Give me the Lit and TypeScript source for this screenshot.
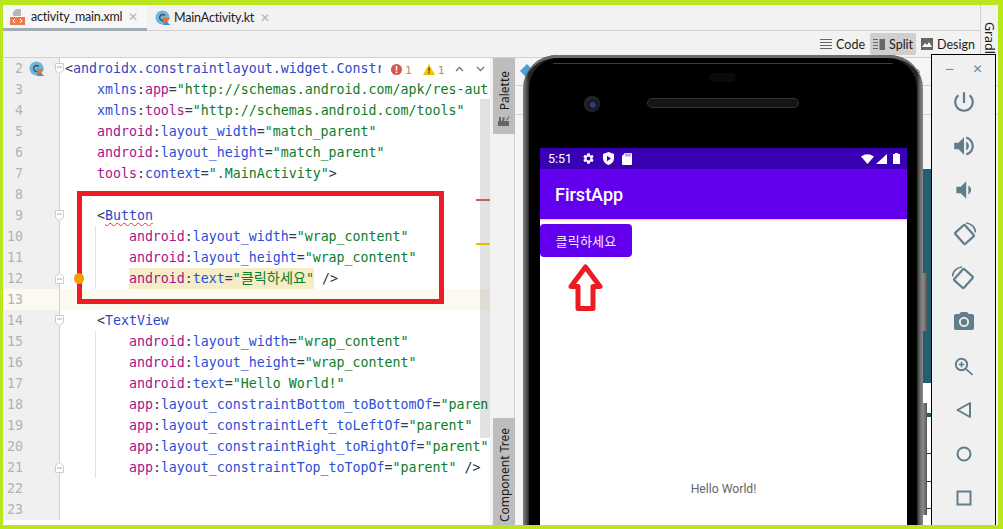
import { LitElement, html, css, svg } from "lit";
import { customElement } from "lit/decorators.js";

const tag = (s: string) => html`<span class="punc">&lt;</span><span class="tag">${s}</span>`;
const ns = (n: string, a: string, v: string, end = "", nsClass = "purple", attrClass = "blue") =>
  html`<span class=${nsClass}>${n}</span>:<span class=${attrClass}>${a}</span>=<span class="val">"${v}"</span>${end ? html` <span class="punc">${end}</span>` : ""}`;

const kotlinIcon = svg`<circle cx="7.5" cy="7.5" r="7" fill="#6fb6d9"/><path d="M10 5.6A3 3 0 1 0 10 9.4" fill="none" stroke="#3d5560" stroke-width="1.4"/><path d="M8 8h7l-3.5 3.5L15 15H8z" fill="#f26b2a"/><path d="M8 15l3.5-3.5L15 15z" fill="#3f8fe0"/>`;

interface Line { n: number; icon?: boolean; fold?: "open" | "close"; bulb?: boolean; cur?: boolean; guide?: boolean; body?: unknown }

const lines: Line[] = [
  { n: 2, icon: true, fold: "open", body: html`<span class="punc">&lt;</span><span class="tag">androidx.constraintlayout.widget.ConstraintLayout</span>` },
  { n: 3, body: html`    ${ns("xmlns", "app", "http://schemas.android.com/apk/res-auto", "", "blue", "purple")}` },
  { n: 4, body: html`    ${ns("xmlns", "tools", "http://schemas.android.com/tools", "", "blue", "purple")}` },
  { n: 5, body: html`    ${ns("android", "layout_width", "match_parent")}` },
  { n: 6, body: html`    ${ns("android", "layout_height", "match_parent")}` },
  { n: 7, body: html`    ${ns("tools", "context", ".MainActivity")}<span class="punc">&gt;</span>` },
  { n: 8, body: "" },
  { n: 9, fold: "open", body: html`    <span class="punc">&lt;</span><span class="tag squig">Button</span>` },
  { n: 10, guide: true, body: html`        ${ns("android", "layout_width", "wrap_content")}` },
  { n: 11, guide: true, body: html`        ${ns("android", "layout_height", "wrap_content")}` },
  { n: 12, guide: true, fold: "close", bulb: true, body: html`        <span class="hl"><span class="purple">android</span>:<span class="blue">text</span>=<span class="val">"<span class="ko">클릭하세요</span>"</span></span> <span class="punc">/&gt;</span>` },
  { n: 13, cur: true, body: "" },
  { n: 14, fold: "open", body: html`    ${tag("TextView")}` },
  { n: 15, guide: true, body: html`        ${ns("android", "layout_width", "wrap_content")}` },
  { n: 16, guide: true, body: html`        ${ns("android", "layout_height", "wrap_content")}` },
  { n: 17, guide: true, body: html`        ${ns("android", "text", "Hello World!")}` },
  { n: 18, guide: true, body: html`        ${ns("app", "layout_constraintBottom_toBottomOf", "parent")}` },
  { n: 19, guide: true, body: html`        ${ns("app", "layout_constraintLeft_toLeftOf", "parent")}` },
  { n: 20, guide: true, body: html`        ${ns("app", "layout_constraintRight_toRightOf", "parent")}` },
  { n: 21, guide: true, fold: "close", body: html`        ${ns("app", "layout_constraintTop_toTopOf", "parent", "/>")}` },
  { n: 22, body: "" },
  { n: 23, body: "" },
];

@customElement("app-root")
export class AppRoot extends LitElement {
  static styles = css`
    :host { display: block; width: 1003px; height: 529px; position: relative; overflow: hidden; font-family: Lato, "Noto Sans", sans-serif; color: #1c1c1c; }
    * { box-sizing: border-box; }
    .frame { width: 1003px; height: 529px; background: #f2f2f2; border: solid #b9e61c; border-width: 5px 5px 4px 3px; display: flex; flex-direction: column; }
    .top { display: flex; height: 53px; flex: none; }
    .topmain { flex: 1; display: flex; flex-direction: column; min-width: 0; }
    .tabs { height: 26px; display: flex; border-bottom: 1px solid #d1d1d1; flex: none; }
    .tab { display: flex; align-items: center; font-size: 12.5px; letter-spacing: -.2px; height: 25px; position: relative; }
    .tab.a { width: 144px; padding-left: 7px; border-bottom: 3px solid #a3adb5; margin-bottom: -1px; height: 26px; background: #f7f7f7; }
    .tab.b { padding-left: 8px; width: 140px; }
    .tab svg { flex: none; margin-right: 4px; }
    .tab.a svg { margin-right: 6px; }
    .x { color: #b4b4b4; font-size: 12px; margin-left: 6px; }
    .toolbar { flex: 1; display: flex; justify-content: flex-end; align-items: center; gap: 2px; border-bottom: 1px solid #d1d1d1; padding-right: 2px; }
    .mode { display: flex; align-items: center; gap: 4px; font-size: 12.5px; height: 22px; padding: 0 3px; border-radius: 2px; }
    .mode.on { background: #cfcfcf; }
    .strip { width: 18px; border-left: 1px solid #d1d1d1; display: flex; flex-direction: column; align-items: center; padding-top: 10px; gap: 7px; font-family: "Noto Sans", sans-serif; font-size: 12.5px; overflow: hidden; }
    .vert { writing-mode: vertical-rl; white-space: nowrap; }
    .main { flex: 1; display: flex; min-height: 0; }
    .editor { width: 487px; flex: none; background: #fff; position: relative; overflow: hidden; }
    .line { display: flex; height: 21px; position: relative; }
    .line.cur { background: #fcf9ee; }
    .gut { width: 57px; flex: none; background: #f0f0f0; border-right: 1px solid #d0d0d0; position: relative; font: 13.3px/21px "DejaVu Sans Mono", monospace; color: #b3b3b3; }
    .line.cur .gut { background: #fcf9ee; }
    .num { position: absolute; right: 36px; top: 0; }
    .gicon { position: absolute; left: 26px; top: 3px; }
    .fold { position: absolute; left: 52px; top: 5px; z-index: 1; }
    .bulb { position: absolute; left: 71px; top: 5px; width: 10px; height: 11px; border-radius: 50%; background: #f2a000; z-index: 1; }
    .code { flex: 1; min-width: 0; margin-right: 1px; position: relative; padding-left: 5px; font: 13.28px/21px "DejaVu Sans Mono", monospace; white-space: pre; overflow: hidden; color: #2f3e4d; }
    .guide { position: absolute; left: 35px; top: 0; bottom: 0; width: 1px; background: #e2e2e2; }
    .tag { color: #2f46c4; }
    .punc { color: #26343f; }
    .blue { color: #2a4fd6; }
    .purple { color: #a3148c; }
    .val { color: #0a7d28; }
    .ko { font-family: "Noto Sans CJK KR", sans-serif; font-size: 14.2px; line-height: 1; }
    .hl { background: #f6edc7; display: inline-block; height: 21px; }
    .squig { text-decoration: underline wavy #e03030 1px; text-underline-offset: 2px; }
    .insp { position: absolute; left: 378px; top: 0; width: 109px; height: 22px; background: #fff; display: flex; align-items: center; font-size: 11px; color: #999; padding-left: 10px; }
    .insp span { margin: 2px 11px 0 3px; color: #a98f70; font-family: "DejaVu Sans Mono", monospace; font-size: 11px; }
    .insp svg { flex: none; }
    .scroll { position: absolute; right: 0; top: 41px; width: 10px; height: 339px; background: rgba(0,0,0,.115); }
    .mark { position: absolute; right: 0; width: 14px; height: 2px; }
    .mark.r { top: 141px; background: #c06060; }
    .mark.y { top: 185px; background: #e0c000; }
    .side { width: 25px; flex: none; background: #f2f2f2; border-right: 1px solid #d0d0d0; display: flex; flex-direction: column; justify-content: space-between; padding-left: 3px; }
    .vtab { background: #bdbdbd; width: 22px; display: flex; flex-direction: column; align-items: center; font-family: "Noto Sans", sans-serif; font-size: 12px; overflow: hidden; }
    .vtab .vert { transform: rotate(180deg); }
    .vtab.p { height: 76px; padding-top: 13px; gap: 5px; }
    .vtab.c { height: 107px; padding-top: 10px; gap: 4px; }
    .design { flex: 1; background: #f5f5f5; display: flex; flex-direction: column; }
    .row1 { height: 28px; border-bottom: 1px solid #d1d1d1; flex: none; }
    .row2 { height: 29px; border-bottom: 1px solid #d1d1d1; flex: none; }
    .phone { position: absolute; left: 523px; top: 55px; width: 400px; height: 470px; border-radius: 34px 34px 0 0; background: linear-gradient(90deg, #7f7f7f, #5a5a5a 3px, #262626 6px, #262626 394px, #6a6a6a 397px, #8a8a8a); padding: 3px 6px 0; }
    .phone::before { content: ""; position: absolute; inset: 0; border-radius: 34px 34px 0 0; border-top: 3px solid #6c6c6c; pointer-events: none; }
    .pin { height: 100%; background: #000; border-radius: 30px 30px 0 0; padding: 90px 10px 0 11px; position: relative; }
    .pin::before { content: ""; position: absolute; left: 24px; right: 24px; top: 5px; height: 1px; background: #3c3c3c; }
    .cam { position: absolute; left: 55px; top: 38px; width: 16px; height: 16px; border-radius: 50%; background: radial-gradient(circle at 55% 55%, #2e3e86 0 2px, #12151f 4px, #262626 7px); }
    .spk { position: absolute; left: 118px; top: 40px; width: 152px; height: 10px; border-radius: 5px; background: #151515; border: 1px solid #333; }
    .sensor { position: absolute; left: 180px; top: 15px; width: 27px; height: 9px; border-radius: 5px; background: #090a0d; }
    .screen { background: #fff; height: 100%; display: flex; flex-direction: column; font-family: Roboto, sans-serif; }
    .status { height: 21px; background: #3a00b3; color: #fff; font-size: 12.5px; display: flex; align-items: center; padding: 0 7px 0 8px; flex: none; gap: 8px; }
    .status .t { margin-right: 2px; }
    .status .sp { flex: 1; }
    .sig { margin-left: -6px; }
    .bat { margin-left: -2px; }
    .appbar { height: 50px; background: #6200ee; color: #fff; font-size: 18px; font-weight: 500; display: flex; align-items: center; padding-left: 15px; flex: none; box-shadow: 0 1px 2px rgba(0,0,0,.25); }
    .btn { margin-top: 5px; width: 92px; height: 33px; background: #6200ee; color: #f4ecff; border-radius: 4px; font: 13px "Noto Sans CJK KR", sans-serif; letter-spacing: .2px; display: flex; align-items: center; justify-content: center; flex: none; }
    .hello { margin-top: 223px; text-align: center; font-size: 12.2px; color: #666; line-height: 18px; }
    .btnside { position: absolute; width: 4px; background: linear-gradient(90deg, #8c8c8c, #555); left: 400px; }
    .btnside.v { top: 218px; height: 58px; }
    .btnside.w { top: 348px; height: 112px; }
    .teal { position: absolute; left: 923px; top: 169px; width: 8px; height: 214px; background: #245e70; }
    .white { position: absolute; left: 923px; top: 383px; width: 8px; height: 142px; background: #fff; }
    .white i { position: absolute; left: 0; width: 100%; background: #245e70; height: 4px; top: 30px; }
    .white b { position: absolute; right: 0; width: 4px; background: #333; height: 1px; }
    .emu { position: absolute; left: 931px; top: 54px; width: 65px; height: 471px; background: #f0f0f0; border: solid #000; border-width: 1px 1px 0; display: flex; flex-direction: column; align-items: center; }
    .wbar { display: flex; justify-content: space-between; align-items: center; width: 38px; height: 28px; flex: none; }
    .wbar span { font-size: 12px; color: #6d8896; line-height: 1; font-family: "DejaVu Sans", sans-serif; }
    .eicons { display: flex; flex-direction: column; align-items: center; gap: 20px; margin-top: 7px; }
    .eicons svg { flex: none; display: block; }
    .flip { transform: scaleX(-1); }
    .redbox { position: absolute; left: 77px; top: 191px; width: 367px; height: 113px; border: 5px solid #ed1c24; }
    .arrow { position: absolute; left: 565px; top: 261px; }
    .blueic { position: absolute; left: 520px; top: 64px; }
    .chev { position: absolute; left: 915px; top: 68px; }
    .s1 { margin-right: 12px; }
  `;

  render() {
    const rotate = svg`<rect x="6" y="5" width="13" height="15" rx="1" transform="rotate(-42 12.5 12.5)" fill="none" stroke="#607d8b" stroke-width="2.2"/><path fill="none" stroke="#607d8b" stroke-width="1.6" d="M14 1A10 10 0 0 1 23.500 10.500"/>`;
    return html`
      <div class="frame">
        <div class="top">
          <div class="topmain">
            <div class="tabs">
              <div class="tab a">
                <svg width="15" height="16" viewBox="0 0 15 16"><path d="M6 0h5v7H3V3z" fill="#b4b8bb"/><rect y="8" width="15" height="8" fill="#ee7a4e"/><path d="M5 10l-2 2 2 2M10 10l2 2-2 2" fill="none" stroke="#fff" stroke-width="1"/></svg>
                activity_main.xml<span class="x">✕</span>
              </div>
              <div class="tab b">
                <svg width="15" height="15" viewBox="0 0 15 15">${kotlinIcon}</svg>
                MainActivity.kt<span class="x">✕</span>
              </div>
            </div>
            <div class="toolbar">
              <div class="mode"><svg width="12" height="11" viewBox="0 0 12 11"><path d="M0 .5h12M0 3.5h12M0 6.5h12M0 9.5h12" stroke="#666" stroke-width="1.2"/></svg>Code</div>
              <div class="mode on"><svg width="12" height="11" viewBox="0 0 12 11"><path d="M0 .5h5M0 3.5h5M0 6.5h5M0 9.5h5" stroke="#666" stroke-width="1.2"/><rect x="6.500" width="5.500" height="11" fill="#666"/></svg>Split</div>
              <div class="mode"><svg width="12" height="12" viewBox="0 0 12 12"><rect width="12" height="12" fill="#666"/><path d="M1 9l3-4 2 2 2-3 3 5z" fill="#fff"/></svg>Design</div>
            </div>
          </div>
          <div class="strip">
            <svg width="13" height="10" viewBox="0 0 13 10"><path d="M0 10V5q1-4 6-4h4l3-1-1 4-1 1v5H9V7H4v3z" fill="#7d7d7d"/></svg>
            <span class="vert">Gradle</span>
          </div>
        </div>
        <div class="main">
          <div class="editor">
            ${lines.map(l => html`
              <div class="line ${l.cur ? "cur" : ""}">
                <div class="gut">
                  <span class="num">${l.n}</span>
                  ${l.icon ? html`<svg class="gicon" width="15" height="15" viewBox="0 0 15 15">${kotlinIcon}</svg>` : ""}
                  ${l.fold ? html`<svg class="fold" width="9" height="11" viewBox="0 0 9 11"><path d=${l.fold === "open" ? "M.5.5h8v7l-4 3-4-3z" : "M.5 10.500h8v-7l-4-3-4 3z"} fill="#fff" stroke="#cdcdcd"></path><path d=${l.fold === "open" ? "M2 4h5" : "M2 6h5"} stroke="#aaa"></path></svg>` : ""}
                </div>
                ${l.bulb ? html`<span class="bulb"></span>` : ""}
                <div class="code">${l.guide ? html`<span class="guide"></span>` : ""}${l.body}</div>
              </div>`)}
            <div class="insp">
              <svg width="11" height="11" viewBox="0 0 11 11"><circle cx="5.500" cy="5.500" r="5.500" fill="#d9534f"/><rect x="4.700" y="2" width="1.600" height="4.500" fill="#fff"/><rect x="4.700" y="7.500" width="1.600" height="1.600" fill="#fff"/></svg><span>1</span>
              <svg width="12" height="11" viewBox="0 0 12 11"><path d="M6 0l6 11H0z" fill="#f0c400"/><rect x="5.400" y="3.500" width="1.200" height="4" fill="#333"/><rect x="5.400" y="8.300" width="1.200" height="1.300" fill="#333"/></svg><span>1</span>
              <svg class="s1" width="9" height="6" viewBox="0 0 9 6"><path d="M1 5l3.500-3.500L8 5" fill="none" stroke="#777" stroke-width="1.300"/></svg>
              <svg width="9" height="6" viewBox="0 0 9 6"><path d="M1 1l3.500 3.500L8 1" fill="none" stroke="#777" stroke-width="1.300"/></svg>
            </div>
            <div class="scroll"></div>
            <div class="mark r"></div>
            <div class="mark y"></div>
          </div>
          <div class="side">
            <div class="vtab p">
              <span class="vert">Palette</span>
              <svg width="12" height="11" viewBox="0 0 12 11"><rect y="6" width="11" height="5" fill="#666"/><path d="M1 6V2h2v4zM4 6l1-4 2 .5-1 3.500zM8 5l3-4 .8.600L9 5.500z" fill="#666"/></svg>
            </div>
            <div class="vtab c">
              <span class="vert">Component Tree</span>
              <svg width="12" height="12" viewBox="0 0 12 12"><circle cx="6" cy="6" r="6" fill="#777"/></svg>
            </div>
          </div>
          <div class="design">
            <div class="row1"></div>
            <div class="row2"></div>
          </div>
        </div>
      </div>

      <svg class="blueic" width="14" height="14" viewBox="0 0 14 14"><path d="M0 7l7-7 7 7-7 7z" fill="#4a9fd8"/></svg>
      <svg class="chev" width="7" height="8" viewBox="0 0 7 8"><path d="M2 1l3 3-3 3" fill="none" stroke="#888" stroke-width="1"/></svg>
      <div class="teal"></div>
      <div class="white"><i></i><b style="top:70px"></b><b style="top:98px"></b><b style="top:125px"></b></div>

      <div class="phone">
        <div class="pin">
          <span class="sensor"></span>
          <span class="cam"></span>
          <span class="spk"></span>
          <div class="screen">
            <div class="status">
              <span class="t">5:51</span>
              <svg width="13" height="13" viewBox="0 0 24 24"><path fill="#fff" d="M19.140 12.940c.04-.3.06-.61.06-.94 0-.32-.02-.64-.07-.94l2.030-1.580c.18-.14.23-.41.12-.61l-1.920-3.320c-.12-.22-.37-.29-.59-.22l-2.390.96c-.5-.38-1.030-.7-1.620-.94l-.36-2.540c-.04-.24-.24-.41-.48-.41h-3.840c-.24 0-.43.17-.47.41l-.36 2.540c-.59.24-1.130.57-1.620.94l-2.390-.96c-.22-.08-.47 0-.59.22L2.740 8.870c-.12.21-.08.47.12.61l2.030 1.580c-.05.3-.09.63-.09.94s.02.64.07.94l-2.030 1.580c-.18.14-.23.41-.12.61l1.920 3.320c.12.22.37.29.59.22l2.390-.96c.5.38 1.030.7 1.620.94l.36 2.540c.05.24.24.41.48.41h3.840c.24 0 .44-.17.47-.41l.36-2.540c.59-.24 1.130-.56 1.620-.94l2.390.96c.22.08.47 0 .59-.22l1.920-3.320c.12-.22.07-.47-.12-.61l-2.010-1.580zM12 15.600c-1.980 0-3.600-1.620-3.600-3.600s1.620-3.600 3.600-3.600 3.600 1.620 3.600 3.600-1.620 3.600-3.600 3.600z"/></svg>
              <svg width="11" height="13" viewBox="0 0 11 13"><path fill="#fff" d="M5.500 0L11 2v4c0 3.500-2.300 6-5.500 7C2.300 12 0 9.500 0 6V2z"/><path fill="#3a00b3" d="M4 3.800l4 2.700-4 2.700z"/></svg>
              <svg width="10" height="12" viewBox="0 0 10 12"><path fill="#fff" d="M3 0h6a1 1 0 0 1 1 1v10a1 1 0 0 1-1 1H1a1 1 0 0 1-1-1V3z"/><path stroke="#3a00b3" stroke-width=".7" d="M4 .5v3M6 .5v3M8 .5v3"/></svg>
              <span class="sp"></span>
              <svg width="13" height="10" viewBox="0 0 13 10"><path fill="#fff" d="M0 2.500Q6.500-2 13 2.500L6.500 10z"/></svg>
              <svg class="sig" width="11" height="10" viewBox="0 0 11 10"><path fill="#fff" d="M11 0v10H0z"/></svg>
              <svg class="bat" width="7" height="11" viewBox="0 0 7 11"><path fill="#fff" d="M2 0h3v1h2v10H0V1h2z"/></svg>
            </div>
            <div class="appbar">FirstApp</div>
            <div class="btn">클릭하세요</div>
            <div class="hello">Hello World!</div>
          </div>
        </div>
        <span class="btnside v"></span>
        <span class="btnside w"></span>
      </div>

      <div class="redbox"></div>
      <svg class="arrow" width="41" height="52" viewBox="0 0 41 52"><polygon points="20.500,6 35,25.500 28,25.500 28,47.500 13,47.500 13,25.500 6,25.500" fill="#fff" stroke="#ed1c24" stroke-width="5" stroke-linejoin="round"/></svg>

      <div class="emu">
        <div class="wbar"><span>−</span><span>✕</span></div>
        <div class="eicons">
          <svg width="24" height="24" viewBox="1 1 22 22"><path fill="#607d8b" d="M13 3h-2v10h2V3zm4.830 2.170l-1.420 1.420C17.990 7.860 19 9.810 19 12c0 3.870-3.130 7-7 7s-7-3.130-7-7c0-2.190 1.010-4.140 2.580-5.420L6.170 5.170C4.230 6.820 3 9.260 3 12c0 4.970 4.030 9 9 9s9-4.030 9-9c0-2.740-1.230-5.180-3.170-6.830z"/></svg>
          <svg width="24" height="24" viewBox="1 1 22 22"><path fill="#607d8b" d="M3 9v6h4l5 5V4L7 9H3zm13.500 3c0-1.770-1.020-3.290-2.500-4.030v8.050c1.480-.73 2.500-2.250 2.500-4.020zM14 3.230v2.060c2.890.86 5 3.540 5 6.710s-2.110 5.850-5 6.710v2.060c4.010-.91 7-4.490 7-8.770s-2.990-7.860-7-8.770z"/></svg>
          <svg width="24" height="24" viewBox="1 1 22 22"><path fill="#607d8b" d="M18.500 12c0-1.770-1.020-3.290-2.500-4.030v8.050c1.480-.73 2.500-2.250 2.500-4.020zM5 9v6h4l5 5V4L9 9H5z"/></svg>
          <svg width="24" height="24" viewBox="0 0 24 24">${rotate}</svg>
          <svg class="flip" width="24" height="24" viewBox="0 0 24 24">${rotate}</svg>
          <svg width="24" height="24" viewBox="0 0 24 24"><path fill="#607d8b" d="M9 2L7.170 4H4c-1.100 0-2 .9-2 2v12c0 1.100.9 2 2 2h16c1.100 0 2-.9 2-2V6c0-1.100-.9-2-2-2h-3.170L15 2H9zm3 15c-2.760 0-5-2.240-5-5s2.240-5 5-5 5 2.240 5 5-2.240 5-5 5z"/><circle cx="12" cy="12" r="3.200" fill="#607d8b"/></svg>
          <svg width="24" height="24" viewBox="0 0 24 24"><circle cx="9.500" cy="10.500" r="5.700" fill="none" stroke="#607d8b" stroke-width="1.900"/><path d="M13.800 14.800l6.700 6M9.500 7.700v5.600M6.700 10.500h5.600" stroke="#607d8b" stroke-width="1.600" fill="none"/></svg>
          <svg width="24" height="24" viewBox="0 0 24 24"><path d="M18 5v14L5.500 12z" fill="none" stroke="#607d8b" stroke-width="2" stroke-linejoin="round"/></svg>
          <svg width="24" height="24" viewBox="0 0 24 24"><circle cx="12" cy="12" r="6.500" fill="none" stroke="#607d8b" stroke-width="2"/></svg>
          <svg width="24" height="24" viewBox="0 0 24 24"><rect x="5.500" y="5.500" width="13" height="13" fill="none" stroke="#607d8b" stroke-width="2"/></svg>
        </div>
      </div>
    `;
  }
}
